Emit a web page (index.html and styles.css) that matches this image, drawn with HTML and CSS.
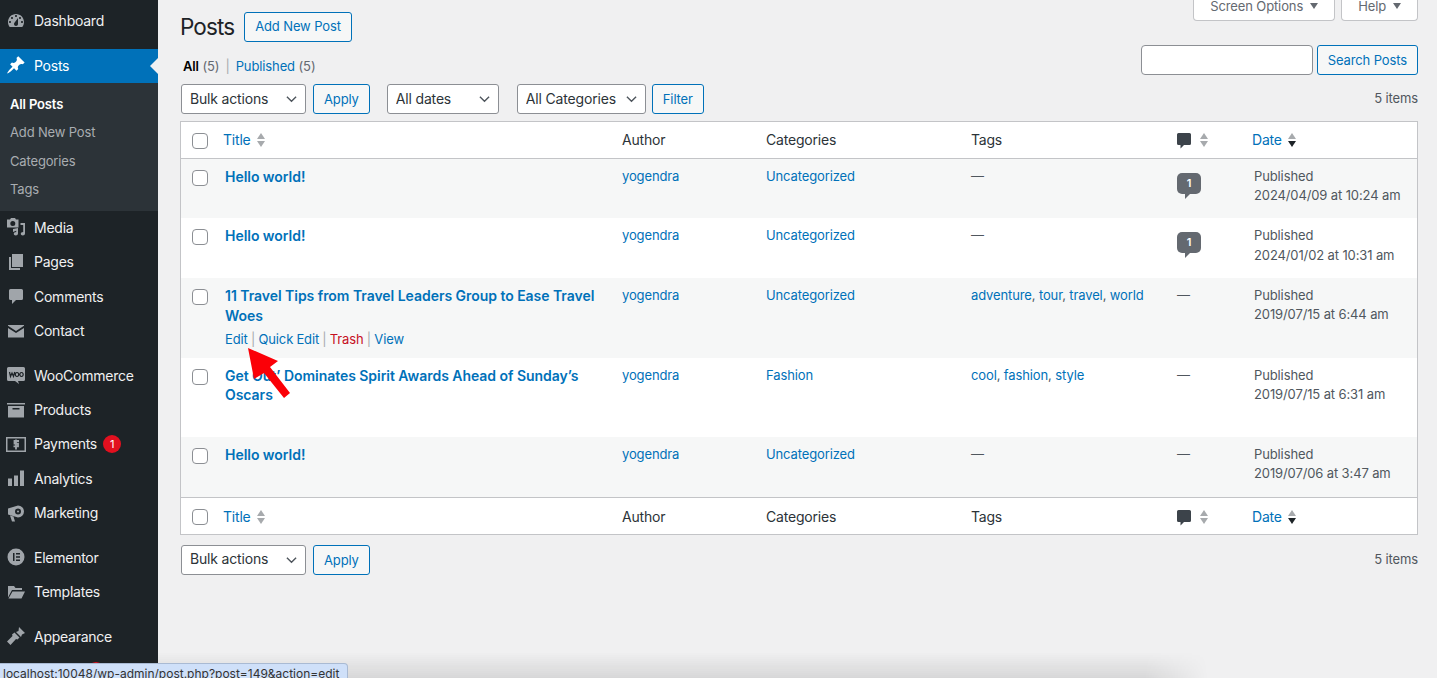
FILE: index.html
```html
<!DOCTYPE html>
<html lang="en">
<head>
  <meta charset="UTF-8" />
  <meta name="viewport" content="width=device-width, initial-scale=1.0"/>
  <title>Posts</title>
  <link rel="stylesheet" href="styles.css">
</head>
<body>

  <!-- Admin sidebar -->
  <nav class="sidebar">
    <a href="#" class="menu-item">
      <svg class="menu-icon" viewBox="0 0 20 20"><path fill-rule="evenodd" d="M3.760 16h12.480c1.100-1.370 1.760-3.110 1.760-5 0-4.420-3.580-8-8-8s-8 3.580-8 8c0 1.890.66 3.630 1.760 5zM10 4c.55 0 1 .45 1 1s-.45 1-1 1-1-.45-1-1 .45-1 1-1zM6 6c.55 0 1 .45 1 1s-.45 1-1 1-1-.45-1-1 .45-1 1-1zm8 0c.55 0 1 .45 1 1s-.45 1-1 1-1-.45-1-1 .45-1 1-1zm-5.370 5.550L12 7v6c0 1.100-.9 2-2 2s-2-.9-2-2c0-.57.24-1.080.63-1.450zM4 10c.55 0 1 .45 1 1s-.45 1-1 1-1-.45-1-1 .45-1 1-1zm12 0c.55 0 1 .45 1 1s-.45 1-1 1-1-.45-1-1 .45-1 1-1z"/></svg>
      Dashboard
    </a>
    <div class="menu-sep"></div>
    <a href="#" class="menu-item active">
      <svg class="menu-icon" viewBox="0 0 20 20"><path d="M10.440 3.020l1.820-1.820 6.360 6.350-1.830 1.820c-1.050-.68-2.480-.57-3.410.36l-.75.75c-.92.93-1.040 2.350-.35 3.410l-1.830 1.820-2.410-2.410-2.800 2.790c-.42.42-3.380 2.710-3.800 2.290s1.860-3.390 2.280-3.810l2.790-2.790L4.100 9.360l1.830-1.820c1.050.69 2.480.57 3.400-.36l.75-.75c.93-.92 1.050-2.350.36-3.410z"/></svg>
      Posts
    </a>
    <div class="submenu">
      <a href="#" class="sub-item current">All Posts</a>
      <a href="#" class="sub-item">Add New Post</a>
      <a href="#" class="sub-item">Categories</a>
      <a href="#" class="sub-item">Tags</a>
    </div>
    <a href="#" class="menu-item">
      <svg class="menu-icon" viewBox="0 0 20 20"><path d="M1 2.500h3l1-1.500h4l1 1.500h2.500v8H1zM6.800 4a2.500 2.500 0 1 0 0 5 2.500 2.500 0 0 0 0-5zM14.500 6H19v10.500c0 1.200-1 2-2.200 2s-2-.7-2-1.700.9-1.800 2.400-1.800V8h-2.700zM7 12l5-1v5.500c0 1.200-1 2-2.200 2s-2-.7-2-1.700.9-1.800 2.400-1.800v-1.200L7 15z" fill-rule="evenodd"/></svg>
      Media
    </a>
    <a href="#" class="menu-item">
      <svg class="menu-icon" viewBox="0 0 20 20"><path d="M6 2h11v13H6zM3 5h2v11h9v2H3z"/></svg>
      Pages
    </a>
    <a href="#" class="menu-item">
      <svg class="menu-icon" viewBox="0 0 20 20"><path d="M4.500 3h11A1.500 1.500 0 0 1 17 4.500v8a1.500 1.500 0 0 1-1.500 1.500H10l-4 4v-4H4.500A1.500 1.500 0 0 1 3 12.500v-8A1.500 1.500 0 0 1 4.500 3z"/></svg>
      Comments
    </a>
    <a href="#" class="menu-item">
      <svg class="menu-icon" viewBox="0 0 20 20"><path d="M2 4h16v.8L10 10 2 4.800zM2 7l8 5 8-5v9.500H2z"/></svg>
      Contact
    </a>
    <div class="menu-sep"></div>
    <a href="#" class="menu-item">
      <svg class="menu-icon" viewBox="0 0 20 20"><path d="M2.500 2h15A1.500 1.500 0 0 1 19 3.500v11a1.500 1.500 0 0 1-1.500 1.500H12l1 3-4-3H2.500A1.500 1.500 0 0 1 1 14.500v-11A1.500 1.500 0 0 1 2.500 2z"/><path d="M3.500 7l1 4.500L6 8l1.500 3.500L8.700 7M11 7.500a1.700 2 0 1 0 .01 0zM15.500 7.500a1.700 2 0 1 0 .01 0z" fill="none" stroke="#1d2327" stroke-width="1.200"/></svg>
      WooCommerce
    </a>
    <a href="#" class="menu-item">
      <svg class="menu-icon" viewBox="0 0 20 20"><path d="M1 3h18v1.500H1zM2 6h16v11.500H2zM6.500 8v1.500h7V8z" fill-rule="evenodd"/></svg>
      Products
    </a>
    <a href="#" class="menu-item">
      <svg class="menu-icon" viewBox="0 0 20 20"><path d="M0 3h20v15H0zM1.500 4.500v12h17v-12z" fill-rule="evenodd"/><path d="M13 7H8.500v2.700H12v2.600H7.500M10 5.500v10" fill="none" stroke="#a0a5aa" stroke-width="1.800"/></svg>
      <span>Payments</span><span class="badge">1</span>
    </a>
    <a href="#" class="menu-item">
      <svg class="menu-icon" viewBox="0 0 20 20"><path d="M2 10.500h4V18H2zM8 7.500h4V18H8zM14 2.500h4V18h-4z"/></svg>
      Analytics
    </a>
    <a href="#" class="menu-item">
      <svg class="menu-icon" viewBox="0 0 20 20"><path fill-rule="evenodd" d="M12 2.500a6 6 0 1 1 0 12L2 11.500v-6zM12 5.500a3 3 0 1 0 0 6 3 3 0 0 0 0-6zM12 7.500a1 1 0 1 1 0 2 1 1 0 0 1 0-2zM4 12.500l3.500 1 1.500 5H6z"/></svg>
      Marketing
    </a>
    <div class="menu-sep"></div>
    <a href="#" class="menu-item">
      <svg class="menu-icon" viewBox="0 0 20 20"><path d="M10 1.500a8.500 8.500 0 1 0 0 17 8.500 8.500 0 0 0 0-17zM7 6h1.500v8H7zM10 6h4v1.500h-4zM10 9.200h4v1.500h-4zM10 12.500h4V14h-4z" fill-rule="evenodd"/></svg>
      Elementor
    </a>
    <a href="#" class="menu-item">
      <svg class="menu-icon" viewBox="0 0 20 20"><path d="M2 4h6l1.500 2H16v2H6L2 15.500zM6.500 9.500H19l-3.500 7H2.500z"/></svg>
      Templates
    </a>
    <div class="menu-sep"></div>
    <a href="#" class="menu-item">
      <svg class="menu-icon" viewBox="0 0 20 20"><path d="M13 1l6 6-3 1.500-1 2.500-5-5 2.500-1zM8.500 6.500l5 5-2 2-1.500-.5L4.500 19 1 15.500 6.500 10l-.5-1.500z"/></svg>
      Appearance
    </a>
    <!-- Next item sits under the link tooltip, only its top edge shows -->
    <a href="#" class="menu-item">
      <svg class="menu-icon" viewBox="0 0 20 20"><path d="M7 2v4h6V2h2v4h2v3c0 3-2 5-5 5.500V18H8v-3.500C5 14 3 12 3 9V6h2V2z"/></svg>
      <span class="badge badge-hidden"></span>
    </a>
  </nav>

  <!-- Main content area -->
  <main class="content">
    <div class="head-row">
      <div class="title-wrap">
        <h1>Posts</h1>
        <a href="#" class="btn">Add New Post</a>
      </div>
      <div class="screen-tabs">
        <button class="screen-tab">Screen Options <i class="caret"></i></button>
        <button class="screen-tab">Help <i class="caret"></i></button>
      </div>
    </div>

    <div class="filter-row">
      <ul class="views">
        <li><a href="#" class="current">All</a> (5)</li>
        <li class="view-sep">|</li>
        <li><a href="#">Published</a> (5)</li>
      </ul>
      <div class="search-box">
        <input type="text" class="search-input" />
        <a href="#" class="btn">Search Posts</a>
      </div>
    </div>

    <div class="tablenav tablenav-top">
      <select class="select select-bulk"><option>Bulk actions</option></select>
      <a href="#" class="btn btn-apply">Apply</a>
      <select class="select select-dates"><option>All dates</option></select>
      <select class="select select-cats"><option>All Categories</option></select>
      <a href="#" class="btn">Filter</a>
      <span class="item-count">5 items</span>
    </div>

    <table class="posts-table">
      <colgroup>
        <col class="col-check"><col class="col-title"><col class="col-author"><col class="col-cats"><col class="col-tags"><col class="col-comments"><col>
      </colgroup>
      <thead>
        <tr>
          <th class="cell-check"><input type="checkbox" class="check" /></th>
          <th class="th-link"><a href="#">Title</a><i class="sort"></i></th>
          <th>Author</th>
          <th>Categories</th>
          <th>Tags</th>
          <th class="th-comments"><svg class="bubble-head" viewBox="0 0 14 16"><path d="M1.500 0h11A1.500 1.500 0 0 1 14 1.500v9a1.500 1.500 0 0 1-1.500 1.500H7l-3.500 3.500V12h-2A1.500 1.500 0 0 1 0 10.500v-9A1.500 1.500 0 0 1 1.500 0z"/></svg><i class="sort"></i></th>
          <th class="th-link"><a href="#">Date</a><i class="sort sort-desc"></i></th>
        </tr>
      </thead>
      <tbody>
        <tr>
          <td class="cell-check"><input type="checkbox" class="check" /></td>
          <td><a href="#" class="post-title">Hello world!</a><div class="row-actions"></div></td>
          <td><a href="#">yogendra</a></td>
          <td><a href="#">Uncategorized</a></td>
          <td>—</td>
          <td><span class="count-bubble">1</span></td>
          <td>Published<br>2024/04/09 at 10:24 am</td>
        </tr>
        <tr>
          <td class="cell-check"><input type="checkbox" class="check" /></td>
          <td><a href="#" class="post-title">Hello world!</a><div class="row-actions"></div></td>
          <td><a href="#">yogendra</a></td>
          <td><a href="#">Uncategorized</a></td>
          <td>—</td>
          <td><span class="count-bubble">1</span></td>
          <td>Published<br>2024/01/02 at 10:31 am</td>
        </tr>
        <tr>
          <td class="cell-check"><input type="checkbox" class="check" /></td>
          <td>
            <a href="#" class="post-title">11 Travel Tips from Travel Leaders Group to Ease Travel Woes</a>
            <div class="row-actions row-actions-open">
              <a href="#">Edit</a> <span class="action-sep">|</span>
              <a href="#">Quick Edit</a> <span class="action-sep">|</span>
              <a href="#" class="trash">Trash</a> <span class="action-sep">|</span>
              <a href="#">View</a>
            </div>
          </td>
          <td><a href="#">yogendra</a></td>
          <td><a href="#">Uncategorized</a></td>
          <td><a href="#">adventure</a>, <a href="#">tour</a>, <a href="#">travel</a>, <a href="#">world</a></td>
          <td>—</td>
          <td>Published<br>2019/07/15 at 6:44 am</td>
        </tr>
        <tr>
          <td class="cell-check"><input type="checkbox" class="check" /></td>
          <td><a href="#" class="post-title">Get Out’ Dominates Spirit Awards Ahead of Sunday’s Oscars</a><div class="row-actions"></div></td>
          <td><a href="#">yogendra</a></td>
          <td><a href="#">Fashion</a></td>
          <td><a href="#">cool</a>, <a href="#">fashion</a>, <a href="#">style</a></td>
          <td>—</td>
          <td>Published<br>2019/07/15 at 6:31 am</td>
        </tr>
        <tr class="last-row">
          <td class="cell-check"><input type="checkbox" class="check" /></td>
          <td><a href="#" class="post-title">Hello world!</a><div class="row-actions"></div></td>
          <td><a href="#">yogendra</a></td>
          <td><a href="#">Uncategorized</a></td>
          <td>—</td>
          <td>—</td>
          <td>Published<br>2019/07/06 at 3:47 am</td>
        </tr>
      </tbody>
      <tfoot>
        <tr>
          <th class="cell-check"><input type="checkbox" class="check" /></th>
          <th class="th-link"><a href="#">Title</a><i class="sort"></i></th>
          <th>Author</th>
          <th>Categories</th>
          <th>Tags</th>
          <th class="th-comments"><svg class="bubble-head" viewBox="0 0 14 16"><path d="M1.500 0h11A1.500 1.500 0 0 1 14 1.500v9a1.500 1.500 0 0 1-1.500 1.500H7l-3.500 3.500V12h-2A1.500 1.500 0 0 1 0 10.500v-9A1.500 1.500 0 0 1 1.500 0z"/></svg><i class="sort"></i></th>
          <th class="th-link"><a href="#">Date</a><i class="sort sort-desc"></i></th>
        </tr>
      </tfoot>
    </table>

    <div class="tablenav tablenav-bottom">
      <select class="select select-bulk"><option>Bulk actions</option></select>
      <a href="#" class="btn btn-apply">Apply</a>
      <span class="item-count">5 items</span>
    </div>
  </main>

  <!-- Things lying over the page: annotation arrow, screenshot shadow, link tooltip -->
  <svg class="red-arrow" viewBox="0 0 60 60"><polygon points="8,8 38,21 30,27 50,53 44,58 24,33 14,39"/></svg>
  <div class="bottom-shade"></div>
  <div class="status-tip">localhost:10048/wp-admin/post.php?post=149&amp;action=edit</div>

</body>
</html>
```

FILE: styles.css
```css
/* Page base */
html, body {
  height: 678px;
}

body {
  margin: 0;
  display: flex;
  overflow: hidden;
  position: relative;
  background-color: #f0f0f1;
  color: #3c434a;
  font-family: Inter, "Noto Sans", sans-serif;
  font-size: 13px;
  line-height: 1.5;
  letter-spacing: -0.12px;
}

a {
  color: #0071b9;
  text-decoration: none;
}

/* Sidebar */
.sidebar {
  width: 158px;
  flex-shrink: 0;
  padding-top: 4.2px;
  background-color: #1d2327;
  overflow: hidden;
}

.menu-item {
  display: flex;
  align-items: center;
  box-sizing: border-box;
  height: 34.4px;
  padding: 0 0 1px 6px;
  color: #f0f0f1;
  font-size: 14px;
  letter-spacing: -0.25px;
  position: relative;
}

.menu-icon {
  width: 20px;
  height: 20px;
  margin-right: 8px;
  flex-shrink: 0;
  fill: #a0a5aa;
}

.menu-sep {
  height: 10.2px;
}

.menu-item.active {
  background-color: #0071b9;
  color: #fff;
}

.menu-item.active .menu-icon {
  fill: #fff;
}

.menu-item.active::after {
  content: "";
  position: absolute;
  right: 0;
  top: 9px;
  border: 8px solid transparent;
  border-left-width: 0;
  border-right-color: #f0f0f1;
}

.submenu {
  padding: 7.4px 0 6.6px;
  background-color: #2c3338;
}

.sub-item {
  display: flex;
  align-items: center;
  height: 28.4px;
  padding-left: 10px;
  color: #a9adb1;
  letter-spacing: -0.15px;
}

.sub-item.current {
  color: #fff;
  font-weight: 600;
}

.badge {
  width: 18px;
  height: 18px;
  margin-left: 6px;
  border-radius: 50%;
  background-color: #e2101f;
  color: #fff;
  font-size: 11px;
  line-height: 18px;
  text-align: center;
}

.badge-hidden {
  margin-left: 53px;
}

/* Content */
.content {
  flex: 1;
  padding: 0 19px 0 22px;
}

.head-row {
  display: flex;
  justify-content: space-between;
  height: 41px;
}

.title-wrap {
  display: flex;
  align-items: center;
  gap: 10px;
  padding-top: 12px;
}

h1 {
  margin: 0;
  color: #1d2327;
  font-size: 22.5px;
  font-weight: 400;
  letter-spacing: -0.9px;
  line-height: 29px;
}

.btn {
  display: inline-flex;
  align-items: center;
  box-sizing: border-box;
  height: 30px;
  padding: 1px 10px 0;
  border: 1px solid #0071b9;
  border-radius: 3px;
  background-color: #f6f7f7;
  color: #0071b9;
  white-space: nowrap;
}

.screen-tabs {
  display: flex;
  gap: 6px;
  align-self: flex-start;
}

.screen-tab {
  display: flex;
  align-items: center;
  gap: 7px;
  box-sizing: border-box;
  height: 21px;
  padding: 0 16px 9px;
  border: 1px solid #c3c4c7;
  border-top: 0;
  border-radius: 0 0 4px 4px;
  background-color: #fff;
  color: #646970;
  font-family: inherit;
  font-size: 13px;
  letter-spacing: inherit;
}

.caret {
  border: 4px solid transparent;
  border-bottom-width: 0;
  border-top: 6px solid #646970;
}

.filter-row {
  display: flex;
  justify-content: space-between;
  align-items: flex-end;
  margin-top: 4px;
}

.views {
  display: flex;
  gap: 6px;
  margin: 0 0 -1px;
  padding: 0 0 0 3px;
  list-style: none;
  color: #646970;
}

.views a.current {
  color: #000;
  font-weight: 600;
}

.view-sep {
  color: #a7aaad;
}

.search-box {
  display: flex;
  gap: 4px;
}

.search-input {
  box-sizing: border-box;
  width: 172px;
  height: 30px;
  border: 1px solid #8c8f94;
  border-radius: 4px;
  background-color: #fff;
}

.tablenav {
  display: flex;
  align-items: center;
  height: 30px;
  margin-top: 9px;
}

.tablenav-bottom {
  margin-top: 10px;
}

.select {
  box-sizing: border-box;
  height: 30px;
  padding: 0 24px 2px 8px;
  border: 1px solid #8c8f94;
  border-radius: 3px;
  background: #fff url("data:image/svg+xml;utf8,<svg xmlns='http://www.w3.org/2000/svg' viewBox='0 0 12 8'><path d='M1 1.500l5 5 5-5' fill='none' stroke='%2350575e' stroke-width='1.500'/></svg>") no-repeat right 8px center / 11px 8px;
  color: #2c3338;
  font-family: inherit;
  font-size: 14px;
  letter-spacing: -0.17px;
  appearance: none;
}

.select-bulk {
  width: 125px;
  margin-left: 1px;
}

.select-dates {
  width: 112px;
}

.select-cats {
  width: 129px;
  margin: 0 6px 0 18px;
}

.btn-apply {
  margin: 0 17px 0 7px;
}

.item-count {
  margin-left: auto;
  color: #50575e;
}

/* Posts table */
.posts-table {
  width: 1238px;
  margin-top: 7px;
  table-layout: fixed;
  border: 1px solid #c3c4c7;
  border-spacing: 0;
  background-color: #fff;
}

.col-check { width: 34px; }
.col-title { width: 397px; }
.col-author { width: 144px; }
.col-cats { width: 205px; }
.col-tags { width: 206px; }
.col-comments { width: 77px; }

.posts-table th {
  height: 35.950px;
  padding: 0 10px;
  color: #2c3338;
  font-size: 14px;
  font-weight: 400;
  letter-spacing: -0.2px;
  text-align: left;
  vertical-align: middle;
}

.posts-table thead th {
  height: 34.950px;
  padding-bottom: 1px;
  border-bottom: 1px solid #c3c4c7;
}

.posts-table tfoot th {
  border-top: 1px solid #c3c4c7;
}

.posts-table td {
  padding: 8px 10px;
  color: #50575e;
  vertical-align: top;
}

.posts-table tbody tr:nth-child(odd) {
  background-color: #f6f7f7;
}

/* Lines the footer border up with the whole pixel below the last row */
.posts-table .last-row td {
  padding-bottom: 8.6px;
}

.posts-table .cell-check {
  padding: 0 0 0 11px;
}

.posts-table td.cell-check {
  padding-top: 11px;
}

.posts-table th.cell-check .check {
  margin-top: 2px;
}

.posts-table .th-link {
  padding-left: 8px;
}

.check {
  display: block;
  width: 16px;
  height: 16px;
  margin: 0;
  border: 1px solid #8c8f94;
  border-radius: 4px;
  background-color: #fff;
  appearance: none;
}

.post-title {
  display: block;
  font-size: 14px;
  font-weight: 600;
  letter-spacing: -0.04px;
  line-height: 19.600px;
}

.row-actions {
  height: 19.900px;
  padding-top: 4px;
}

.row-actions-open {
  height: 19.800px;
  padding-top: 5px;
  word-spacing: -0.3px;
}

.action-sep {
  color: #a7aaad;
}

.trash {
  color: #c6101f;
}

.sort {
  display: inline-block;
  position: relative;
  width: 9px;
  height: 14px;
  margin-left: 6px;
  vertical-align: -2px;
}

.sort::before,
.sort::after {
  content: "";
  position: absolute;
  left: 0;
  border: 4.5px solid transparent;
  border-top-width: 0;
  border-bottom: 6px solid #a7aaad;
}

.sort::before {
  top: 0;
}

.sort::after {
  bottom: 0;
  transform: rotate(180deg);
}

.sort-desc::after {
  border-bottom-color: #1d2327;
}

.bubble-head {
  width: 14px;
  height: 16px;
  fill: #3c434a;
  vertical-align: -4px;
}

.th-comments .sort {
  margin-left: 9px;
}

.count-bubble {
  display: block;
  position: relative;
  width: 24px;
  height: 21px;
  margin-top: 6px;
  border-radius: 5px;
  background-color: #646970;
  color: #fff;
  font-size: 11px;
  font-weight: 600;
  line-height: 21px;
  text-align: center;
}

.count-bubble::after {
  content: "";
  position: absolute;
  left: 8px;
  top: 21px;
  border-top: 5px solid #646970;
  border-right: 5px solid transparent;
}

/* Overlays */
.red-arrow {
  position: absolute;
  left: 240px;
  top: 340px;
  width: 60px;
  height: 60px;
  fill: #fb0007;
}

.bottom-shade {
  position: absolute;
  left: 158px;
  bottom: 0;
  width: 1050px;
  height: 26px;
  background: linear-gradient(rgba(0, 0, 0, 0), rgba(0, 0, 0, 0.1));
  -webkit-mask-image: linear-gradient(to right, #000 94%, transparent);
  mask-image: linear-gradient(to right, #000 94%, transparent);
}

.status-tip {
  position: absolute;
  left: 0;
  top: 663px;
  box-sizing: border-box;
  width: 348px;
  height: 16px;
  padding-left: 3px;
  border: 1px solid #a9bad3;
  border-left: 0;
  border-radius: 0 4px 0 0;
  background-color: #cfe0f9;
  color: #333;
  font-size: 12px;
  letter-spacing: 0;
  line-height: 19px;
  white-space: nowrap;
}
```
